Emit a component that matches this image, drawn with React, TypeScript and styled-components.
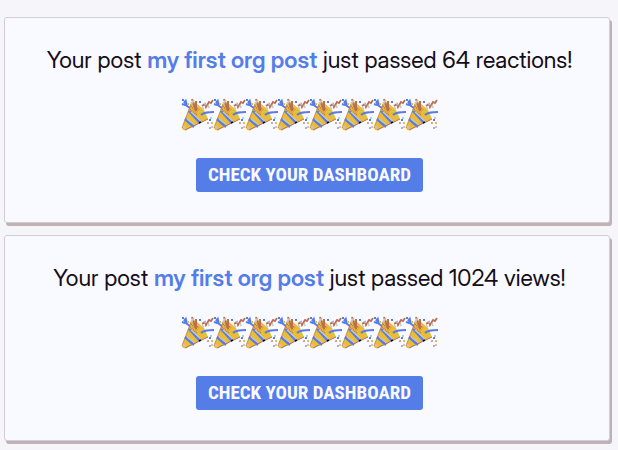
import React from "react";
import styled, { createGlobalStyle } from "styled-components";

const GlobalStyle = createGlobalStyle`
  *, *::before, *::after { box-sizing: border-box; }
  body {
    margin: 0;
    background: #f6f6fa;
    font-family: "Inter Display", Inter, "Liberation Sans", sans-serif;
    color: #150d16;
  }
`;

const Feed = styled.main`
  display: flex;
  flex-direction: column;
  gap: 12px;
  padding: 17px 8px 9px 4px;
`;

const Card = styled.article`
  display: flex;
  flex-direction: column;
  align-items: center;
  padding: 26px 8px 30px 13px;
  background: #f9faff;
  border: 1px solid #d3ccd4;
  border-radius: 3px;
  box-shadow: 2px 3px 0 #bfb1b4;
`;

const Message = styled.p`
  margin: 0;
  font-size: 23px;
  line-height: 32px;
  text-align: center;
`;

const PostLink = styled.a`
  color: #557de8;
  font-weight: 600;
  text-decoration: none;
`;

const Celebration = styled.div`
  display: flex;
  margin: 23px 0 27px;
`;

const PopperIcon = styled.svg`
  display: block;
  width: 32px;
  height: 32px;
  overflow: visible;
`;

const DashboardButton = styled.button`
  height: 34px;
  padding: 0 12px;
  border: 0;
  border-radius: 3px;
  background: #557de8;
  color: #f9faff;
  font-family: "Roboto Condensed", Roboto, "Liberation Sans", sans-serif;
  font-size: 19px;
  font-weight: 700;
  line-height: 34px;
  white-space: nowrap;
  cursor: pointer;
`;

function Popper() {
  return (
    <PopperIcon viewBox="0 0 32 32" aria-hidden="true" fill="none">
      <path d="M9 5Q11 2 14 4L22 11 26 20 4 31Q0 32 0 28Z" fill="#e8bd38" />
      <path d="M0 29L9 5" stroke="#c98f55" strokeWidth="1" />
      <path d="M9 7l6 6M8 10l7 6M12 7l5 4" stroke="#ba7053" strokeWidth="1.6" strokeDasharray="1 1" />
      <path d="M7 12L18 24M3 20L12 28" stroke="#557de8" strokeWidth="2.4" />
      <path d="M9 13L20 23M5 20L14 27M1 27L5 31" stroke="#c9c4cd" strokeWidth="1.2" />
      <path d="M3 31L26 20" stroke="#ba7053" strokeWidth="1" />
      <path d="M17 24l2-1" stroke="#150d16" strokeWidth="1.5" />
      <path d="M14 12C12 6 11 3 10 0M14 12L14 2" stroke="#ba7053" strokeWidth="2" />
      <path d="M9 5l3-4" stroke="#c9c4cd" strokeWidth="2" />
      <path d="M0 1h2M0 5l3 1 1-3 1 4 3 2M4 1L2 4" stroke="#557de8" strokeWidth="2" />
      <path d="M19 16C22 13 26 13 32 13" stroke="#557de8" strokeWidth="2" />
      <path d="M20 7l3-2 1 3 3-5 2 1 2-3" stroke="#ba7053" strokeWidth="1.8" />
      <path d="M22 4l2 2M26 6l1 3M20 8l2 2" stroke="#c9c4cd" strokeWidth="1.6" />
      <path d="M17 2h2v2h-2zM27 20h2v2h-2z" fill="#557de8" />
      <path d="M5 4h2v2H5zM29 23h2v2h-2z" fill="#e8bd38" />
      <path d="M25 23h2v2h-2zM27 28h2v2h-2z" fill="#c9a99f" />
      <path d="M28 18h2v2h-2zM29 27h2v2h-2z" fill="#c9c4cd" />
    </PopperIcon>
  );
}

function MilestoneCard({ milestone }: { milestone: string }) {
  return (
    <Card>
      <Message>
        Your post <PostLink href="#post">my first org post</PostLink> just passed {milestone}!
      </Message>
      <Celebration>
        {Array.from({ length: 8 }, (_, index) => (
          <Popper key={index} />
        ))}
      </Celebration>
      <DashboardButton type="button">CHECK YOUR DASHBOARD</DashboardButton>
    </Card>
  );
}

export default function App() {
  return (
    <>
      <GlobalStyle />
      <Feed>
        <MilestoneCard milestone="64 reactions" />
        <MilestoneCard milestone="1024 views" />
      </Feed>
    </>
  );
}
